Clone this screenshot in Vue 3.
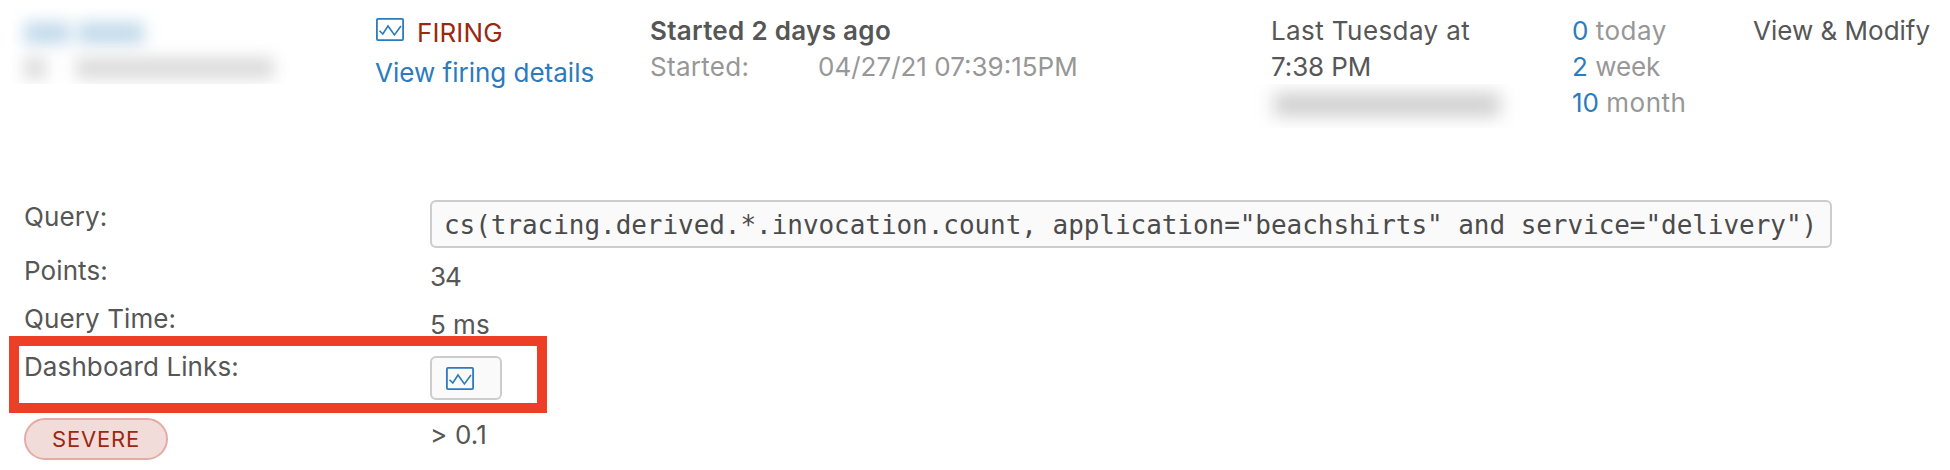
<script setup>
const counts = [
  { n: '0', unit: 'today', cls: 'today' },
  { n: '2', unit: 'week', cls: 'week' },
  { n: '10', unit: 'month', cls: 'month' },
]
</script>

<template>
  <main class="page">
    <header class="summary">
      <div class="col-name">
        <span class="smear blue"><i class="w1"></i><i class="w2"></i></span>
        <span class="smear gray"><i class="w3"></i><i class="w4"></i></span>
      </div>
      <div class="col-status">
        <div class="status">
          <svg class="chart" viewBox="0 0 28 23" width="28" height="23">
            <rect x="0.9" y="0.9" width="26.2" height="21.2" rx="1" />
            <path d="M3.5 12.8 L6.8 16 L12 8 L18.4 17 L25 8" />
          </svg>
          <span class="firing">FIRING</span>
        </div>
        <a class="details-link">View firing details</a>
      </div>
      <div class="col-started">
        <div class="ago">Started 2 days ago</div>
        <div class="when"><span class="label">Started:</span><span>04/27/21 07:39:15PM</span></div>
      </div>
      <div class="col-updated">
        <div class="last">Last Tuesday at</div>
        <div class="time">7:38 PM</div>
        <div class="author"><i></i></div>
      </div>
      <div class="col-counts">
        <div v-for="c in counts" :key="c.unit" :class="c.cls"><b>{{ c.n }}</b> <span>{{ c.unit }}</span></div>
      </div>
      <div class="col-action">View &amp; Modify</div>
    </header>

    <section class="details">
      <div class="row r-query">
        <div class="key">Query:</div>
        <code class="query">cs(tracing.derived.*.invocation.count, application="beachshirts" and service="delivery")</code>
      </div>
      <div class="row r-points">
        <div class="key">Points:</div>
        <div class="value num">34</div>
      </div>
      <div class="row r-time">
        <div class="key">Query Time:</div>
        <div class="value">5 ms</div>
      </div>
      <div class="row r-links">
        <div class="key">Dashboard Links:</div>
        <button class="dash" aria-label="Open dashboard">
          <svg class="chart" viewBox="0 0 28 23" width="28" height="23">
            <rect x="0.9" y="0.9" width="26.2" height="21.2" rx="1" />
            <path d="M3.5 12.8 L6.8 16 L12 8 L18.4 17 L25 8" />
          </svg>
        </button>
        <div class="highlight"></div>
      </div>
      <div class="row r-severe">
        <div class="key"><span class="pill">SEVERE</span></div>
        <div class="value threshold">&gt; 0.1</div>
      </div>
    </section>
  </main>
</template>

<style>
body { background: #fff; }
</style>

<style scoped>
.page {
  width: 1950px;
  height: 470px;
  overflow: hidden;
  background: #fff;
  color: #565656;
  font: 26px/36px Inter, "Liberation Sans", sans-serif;
  white-space: nowrap;
}
.summary {
  display: grid;
  grid-template-columns: 363px 275px 601px 311px 203px 197px;
  height: 186px;
  box-sizing: border-box;
}
.summary > div { padding-top: 13px; }
.summary > .col-name {
  margin-left: 12px;
  width: 290px;
  height: 77px;
  margin-top: 7px;
  padding: 15px 0 0 12px;
  box-sizing: border-box;
  overflow: hidden;
}
.smear { display: flex; gap: 8px; height: 22px; filter: blur(8px); }
.smear i { display: block; height: 22px; }
.blue i { background: #c2daeb; }
.gray { margin-top: 13px; gap: 30px; }
.gray i { background: #dcdcdc; }
.w1 { width: 46px; }
.w2 { width: 66px; }
.w3 { width: 22px; }
.w4 { width: 198px; }
.col-status { padding-left: 12px; }
.status { display: flex; height: 42px; padding-top: 2px; box-sizing: border-box; }
.chart { display: block; fill: none; stroke: #2c7bbd; stroke-width: 1.8; }
.chart path { stroke-width: 1.6; }
.status .chart { margin: 3px 13px 0 1px; }
.firing { color: #9b2810; letter-spacing: 0.1px; }
.details-link { display: block; color: #2c7bbd; }
.col-started { padding-left: 12px; }
.ago { font-weight: 600; letter-spacing: 0.3px; }
.when { display: flex; color: #979797; }
.label { width: 168px; letter-spacing: 0.3px; }
.col-updated { padding-left: 32px; }
.last { letter-spacing: 0.4px; }
.time { letter-spacing: -0.1px; }
.author { width: 282px; margin-left: -21px; height: 44px; margin-top: -1px; overflow: hidden; }
.author i { display: block; width: 226px; height: 23px; margin: 9px 0 0 24px; background: #cecece; filter: blur(9px); }
.col-counts { padding-left: 22px; color: #979797; }
.col-counts b { color: #2c7bbd; font-weight: 400; }
.today span, .month span { letter-spacing: 0.5px; }
.week span { letter-spacing: -0.1px; }
.details { display: flex; flex-direction: column; }
.row { position: relative; display: flex; padding-left: 24px; box-sizing: border-box; }
.key { width: 406px; letter-spacing: 0.1px; flex: none; }
.r-query { height: 67px; padding-top: 14px; }
.r-query .key { margin-top: -1px; }
.query {
  box-sizing: border-box;
  width: 1402px;
  height: 48px;
  padding: 5px 12px 3px;
  border: 2px solid #ccc;
  border-radius: 6px;
  background: #fafafa;
  color: #4b4b4b;
  font: 26px/36px "DejaVu Sans Mono", monospace;
  letter-spacing: -0.05px;
}
.r-points, .r-time { height: 48px; }
.r-points .value, .r-time .value { margin-top: 6px; }
.num { letter-spacing: -1px; }
.r-links { height: 64px; }
.dash {
  width: 72px;
  height: 44px;
  margin: 7px 0 0;
  padding: 0 0 0 14px;
  border: 2px solid #ccc;
  border-radius: 6px;
  background: #fafafa;
}
.highlight {
  position: absolute;
  left: 9px;
  top: -13px;
  width: 538px;
  height: 77px;
  box-sizing: border-box;
  border: 10px solid #ec3f25;
}
.r-severe { height: 57px; }
.pill {
  display: block;
  width: 144px;
  height: 42px;
  margin-top: 5px;
  box-sizing: border-box;
  border: 2px solid #e4aca4;
  border-radius: 21px;
  background: #f2dcda;
  color: #9b2810;
  font-size: 22px;
  line-height: 38px;
  letter-spacing: 0.8px;
  text-align: center;
}
.threshold { margin-top: 4px; letter-spacing: 0.2px; }
</style>
